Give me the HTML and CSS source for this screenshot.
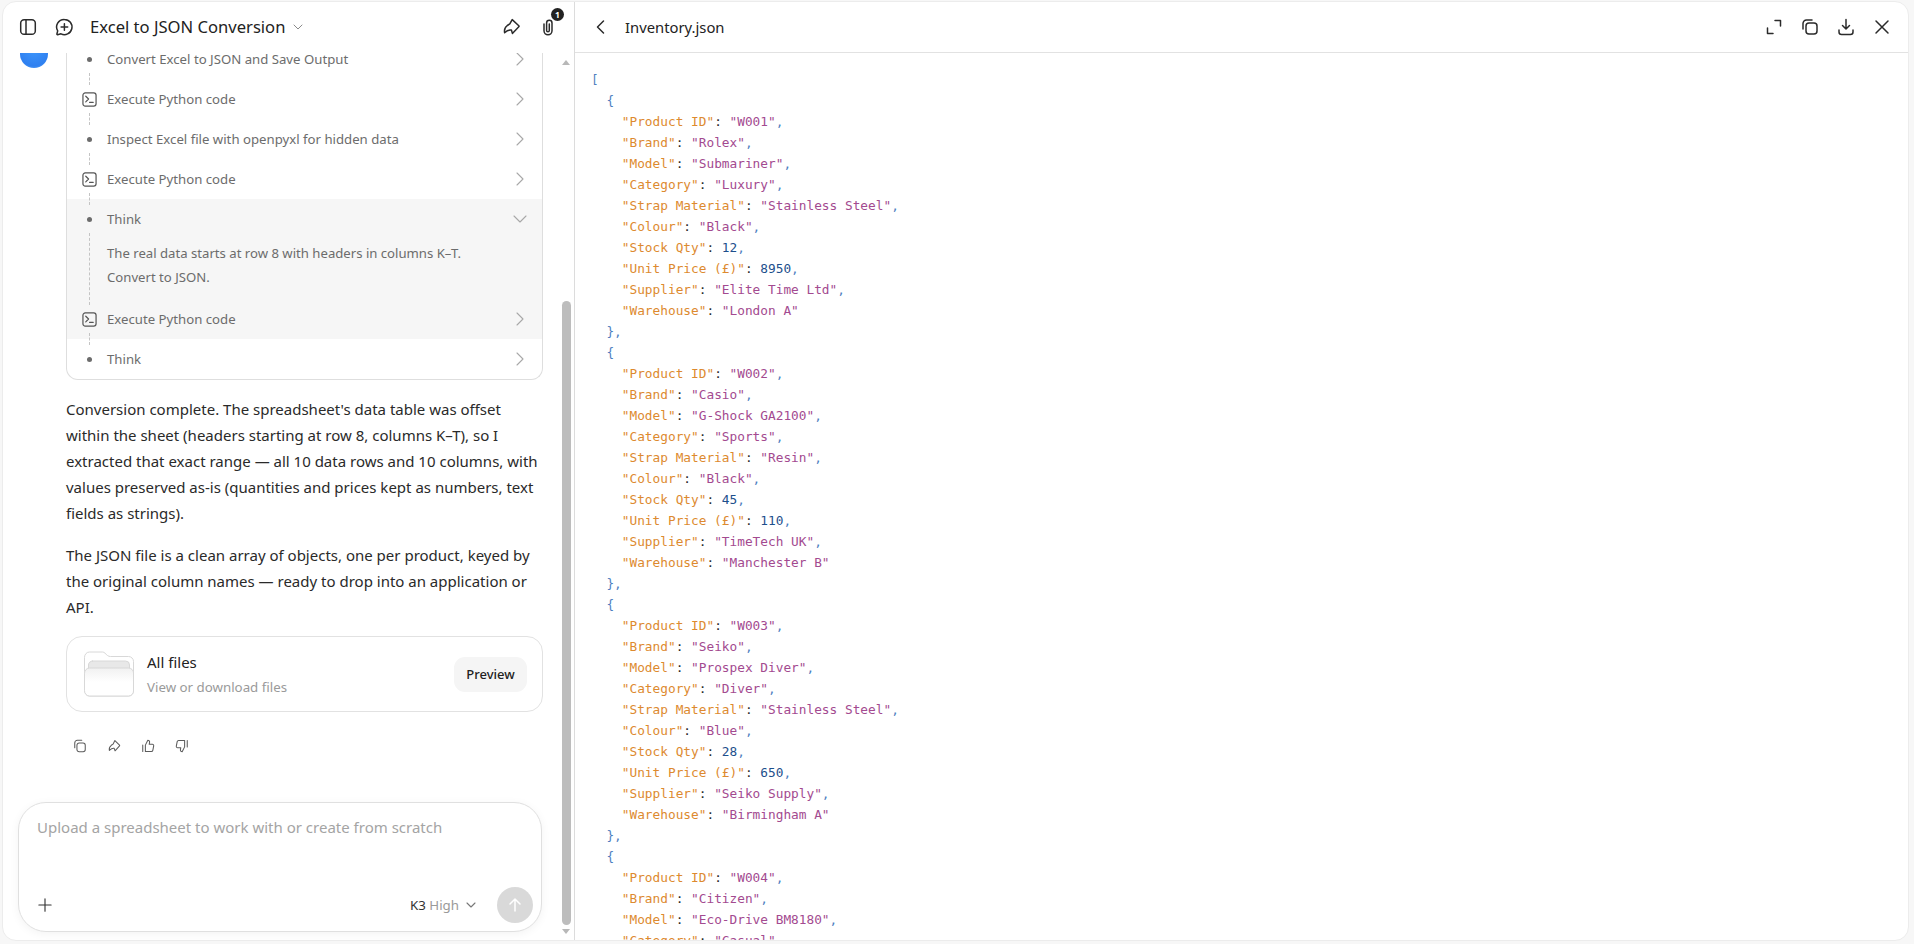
FILE: index.html
```html
<!DOCTYPE html>
<html lang="en">
<head>
<meta charset="utf-8">
<title>Excel to JSON Conversion</title>
<link rel="stylesheet" href="styles.css">
</head>
<body>
<div class="app">
  <section class="chat">
    <header class="chat-head">
      <svg class="ic20" viewBox="0 0 20 20"><rect x="2.7" y="2.7" width="14.6" height="14.6" rx="3.4"/><path d="M8 3v14"/></svg>
      <svg class="ic20" viewBox="0 0 20 20"><path d="M10.4 2.4a7.6 7.6 0 1 1-3.4 14.4l-3.4.9c-.5.1-.8-.2-.7-.7l.8-3.1a7.6 7.6 0 0 1 6.7-11.5z"/><path d="M10.4 6.7v6.6M7.1 10h6.6"/></svg>
      <h1 class="chat-title">Excel to JSON Conversion</h1>
      <svg class="chev-sm" viewBox="0 0 12 12"><path d="M2 4l4 4 4-4"/></svg>
      <div class="head-right">
        <svg class="ic20" viewBox="0 0 20 20"><path d="M11.2 2.6l6.6 6.200c.3.3.3.7 0 1l-6.400 6.600-1-3.400c-2.600-.4-4.400.4-6.800 2.700-.4-2.400-.3-5 2.700-7.200l2.500-1.600z"/></svg>
        <span class="clip">
          <svg class="ic20" viewBox="0 0 20 20"><path d="M6 7v6.800a4 4 0 0 0 8 0V6a2.700 2.700 0 0 0-5.400 0v7.500a1.300 1.300 0 0 0 2.700 0V7"/></svg>
          <span class="badge">1</span>
        </span>
      </div>
    </header>
    <div class="chat-body">
      <div class="chat-main">
        <div class="scroller">
          <span class="avatar"></span>
          <div class="thread">
            <div class="steps">
              <div class="step link"><span class="dot-wrap"><i class="dot"></i></span><span class="step-label">Convert Excel to JSON and Save Output</span><svg class="chev" viewBox="0 0 16 16"><path d="M5 2l6 6-6 6"/></svg></div>
              <div class="step link"><span class="dot-wrap"><svg class="term" viewBox="0 0 16 16"><rect x="1" y="1" width="14" height="14" rx="2.500"/><path d="M4 4.500L7 7.500 4 10.500M8 11h4"/></svg></span><span class="step-label">Execute Python code</span><svg class="chev" viewBox="0 0 16 16"><path d="M5 2l6 6-6 6"/></svg></div>
              <div class="step link"><span class="dot-wrap"><i class="dot"></i></span><span class="step-label">Inspect Excel file with openpyxl for hidden data</span><svg class="chev" viewBox="0 0 16 16"><path d="M5 2l6 6-6 6"/></svg></div>
              <div class="step link"><span class="dot-wrap"><svg class="term" viewBox="0 0 16 16"><rect x="1" y="1" width="14" height="14" rx="2.500"/><path d="M4 4.500L7 7.500 4 10.500M8 11h4"/></svg></span><span class="step-label">Execute Python code</span><svg class="chev" viewBox="0 0 16 16"><path d="M5 2l6 6-6 6"/></svg></div>
              <div class="step-group">
                <div class="step"><span class="dot-wrap"><i class="dot"></i></span><span class="step-label">Think</span><svg class="chev" viewBox="0 0 16 16"><path d="M2 5l6 6 6-6"/></svg></div>
                <div class="step-detail"><p>The real data starts at row 8 with headers in columns K–T.</p><p>Convert to JSON.</p></div>
                <div class="step link"><span class="dot-wrap"><svg class="term" viewBox="0 0 16 16"><rect x="1" y="1" width="14" height="14" rx="2.500"/><path d="M4 4.500L7 7.500 4 10.500M8 11h4"/></svg></span><span class="step-label">Execute Python code</span><svg class="chev" viewBox="0 0 16 16"><path d="M5 2l6 6-6 6"/></svg></div>
              </div>
              <div class="step"><span class="dot-wrap"><i class="dot"></i></span><span class="step-label">Think</span><svg class="chev" viewBox="0 0 16 16"><path d="M5 2l6 6-6 6"/></svg></div>
            </div>
            <p class="para">Conversion complete. The spreadsheet's data table was offset within the sheet (headers starting at row 8, columns K–T), so I extracted that exact range — all 10 data rows and 10 columns, with values preserved as-is (quantities and prices kept as numbers, text fields as strings).</p>
            <p class="para">The JSON file is a clean array of objects, one per product, keyed by the original column names — ready to drop into an application or API.</p>
            <div class="files">
              <svg class="folder" viewBox="0 0 50 46">
                <defs><linearGradient id="fg" x1="0" y1="0" x2="0" y2="1"><stop offset="0" stop-color="#f1f1f1"/><stop offset="0.5" stop-color="#fff"/></linearGradient></defs>
                <path d="M.5 6a5 5 0 0 1 5-5h13c2 0 3 2 5 3.500 1 .8 2 1 3 1h18a5 5 0 0 1 5 5V40a5 5 0 0 1-5 5H5.500a5 5 0 0 1-5-5z" fill="#fff" stroke="#d8d8d8"/>
                <rect x="4.500" y="10" width="41" height="16" rx="4" fill="#e8e8e8" stroke="#d8d8d8"/>
                <path d="M.5 22a5 5 0 0 1 5-5h39a5 5 0 0 1 5 5V40a5 5 0 0 1-5 5H5.500a5 5 0 0 1-5-5z" fill="url(#fg)" stroke="#d8d8d8"/>
              </svg>
              <div class="files-text"><div class="files-name">All files</div><div class="files-sub">View or download files</div></div>
              <button class="preview">Preview</button>
            </div>
            <div class="actions">
              <svg class="ic14" viewBox="0 0 16 16"><rect x="4.500" y="4.500" width="9.500" height="10" rx="2.500"/><path d="M2 10V4.500A3 3 0 0 1 5 1.500h5"/></svg>
              <svg class="ic14" viewBox="0 0 16 16"><path d="M9 1.800l5.300 5.200c.3.300.3.600 0 .9L9.200 13.500l-1-2.800c-2.200-.4-3.500.5-5.500 2.300-.4-2-.2-4 2.200-5.800l2-1.300z"/></svg>
              <svg class="ic14" viewBox="0 0 16 16"><path d="M5 7l2.800-5.500c1.400 0 2.200 1 2 2.300L9.400 6H13c1 0 1.700.9 1.500 1.900l-1 5c-.2.800-.8 1.300-1.600 1.300H5zM2 7v7.200"/></svg>
              <svg class="ic14" viewBox="0 0 16 16"><path d="M11 9l-2.800 5.500c-1.400 0-2.200-1-2-2.300L6.600 10H3c-1 0-1.700-.9-1.500-1.900l1-5c.2-.8.800-1.300 1.600-1.300H11zM14 1.800V9"/></svg>
            </div>
          </div>
        </div>
        <div class="composer">
          <div class="placeholder">Upload a spreadsheet to work with or create from scratch</div>
          <div class="composer-bar">
            <svg class="plus" viewBox="0 0 16 16"><path d="M8 1v14M1 8h14"/></svg>
            <span class="model"><b>K3</b> High</span>
            <svg class="chev-xs" viewBox="0 0 12 12"><path d="M2 4l4 4 4-4"/></svg>
            <span class="send"><svg viewBox="0 0 16 16"><path d="M8 14V2M3 7l5-5 5 5"/></svg></span>
          </div>
        </div>
      </div>
      <div class="scrollbar"><i class="arrow-up"></i><div class="track"><div class="thumb"></div></div><i class="arrow-down"></i></div>
    </div>
  </section>
  <section class="viewer">
    <header class="viewer-head">
      <svg class="ic20" viewBox="0 0 20 20"><path d="M12.500 4l-6 6 6 6"/></svg>
      <h2 class="viewer-title">Inventory.json</h2>
      <div class="viewer-actions">
        <svg class="ic20" viewBox="0 0 20 20"><path d="M11 3.500h5.500V9M3.500 11v5.500H9"/></svg>
        <svg class="ic20" viewBox="0 0 20 20"><rect x="6" y="6" width="11" height="11" rx="3"/><path d="M3 12V6.500A3.500 3.500 0 0 1 6.500 3H12"/></svg>
        <svg class="ic20" viewBox="0 0 20 20"><path d="M10 2.500v9M6.500 8.500l3.500 3.500 3.500-3.500M3 13v2a2.500 2.500 0 0 0 2.500 2.500h9A2.500 2.500 0 0 0 17 15v-2"/></svg>
        <svg class="ic20" viewBox="0 0 20 20"><path d="M4 4l12 12M16 4L4 16"/></svg>
      </div>
    </header>
<pre class="code"><span class="p">[</span>
  <span class="p">{</span>
    <span class="k">"Product ID"</span>: <span class="s">"W001"</span><span class="p">,</span>
    <span class="k">"Brand"</span>: <span class="s">"Rolex"</span><span class="p">,</span>
    <span class="k">"Model"</span>: <span class="s">"Submariner"</span><span class="p">,</span>
    <span class="k">"Category"</span>: <span class="s">"Luxury"</span><span class="p">,</span>
    <span class="k">"Strap Material"</span>: <span class="s">"Stainless Steel"</span><span class="p">,</span>
    <span class="k">"Colour"</span>: <span class="s">"Black"</span><span class="p">,</span>
    <span class="k">"Stock Qty"</span>: <span class="n">12</span><span class="p">,</span>
    <span class="k">"Unit Price (£)"</span>: <span class="n">8950</span><span class="p">,</span>
    <span class="k">"Supplier"</span>: <span class="s">"Elite Time Ltd"</span><span class="p">,</span>
    <span class="k">"Warehouse"</span>: <span class="s">"London A"</span>
  <span class="p">},</span>
  <span class="p">{</span>
    <span class="k">"Product ID"</span>: <span class="s">"W002"</span><span class="p">,</span>
    <span class="k">"Brand"</span>: <span class="s">"Casio"</span><span class="p">,</span>
    <span class="k">"Model"</span>: <span class="s">"G-Shock GA2100"</span><span class="p">,</span>
    <span class="k">"Category"</span>: <span class="s">"Sports"</span><span class="p">,</span>
    <span class="k">"Strap Material"</span>: <span class="s">"Resin"</span><span class="p">,</span>
    <span class="k">"Colour"</span>: <span class="s">"Black"</span><span class="p">,</span>
    <span class="k">"Stock Qty"</span>: <span class="n">45</span><span class="p">,</span>
    <span class="k">"Unit Price (£)"</span>: <span class="n">110</span><span class="p">,</span>
    <span class="k">"Supplier"</span>: <span class="s">"TimeTech UK"</span><span class="p">,</span>
    <span class="k">"Warehouse"</span>: <span class="s">"Manchester B"</span>
  <span class="p">},</span>
  <span class="p">{</span>
    <span class="k">"Product ID"</span>: <span class="s">"W003"</span><span class="p">,</span>
    <span class="k">"Brand"</span>: <span class="s">"Seiko"</span><span class="p">,</span>
    <span class="k">"Model"</span>: <span class="s">"Prospex Diver"</span><span class="p">,</span>
    <span class="k">"Category"</span>: <span class="s">"Diver"</span><span class="p">,</span>
    <span class="k">"Strap Material"</span>: <span class="s">"Stainless Steel"</span><span class="p">,</span>
    <span class="k">"Colour"</span>: <span class="s">"Blue"</span><span class="p">,</span>
    <span class="k">"Stock Qty"</span>: <span class="n">28</span><span class="p">,</span>
    <span class="k">"Unit Price (£)"</span>: <span class="n">650</span><span class="p">,</span>
    <span class="k">"Supplier"</span>: <span class="s">"Seiko Supply"</span><span class="p">,</span>
    <span class="k">"Warehouse"</span>: <span class="s">"Birmingham A"</span>
  <span class="p">},</span>
  <span class="p">{</span>
    <span class="k">"Product ID"</span>: <span class="s">"W004"</span><span class="p">,</span>
    <span class="k">"Brand"</span>: <span class="s">"Citizen"</span><span class="p">,</span>
    <span class="k">"Model"</span>: <span class="s">"Eco-Drive BM8180"</span><span class="p">,</span>
    <span class="k">"Category"</span>: <span class="s">"Casual"</span><span class="p">,</span>
</pre>
  </section>
</div>
</body>
</html>
```

FILE: styles.css
```css
* { box-sizing: border-box; }
html, body { height: 100%; margin: 0; overflow: hidden; }
body { background: #f7f7f7; font-family: "Noto Sans", sans-serif; color: #222; }
svg { fill: none; stroke: currentColor; stroke-linecap: round; stroke-linejoin: round; flex: none; display: block; }
h1, h2, p { margin: 0; font-weight: 400; }

.app {
  display: flex; height: 940px; margin: 1px 5px 0 2px;
  background: #fff; border: 1px solid #ececec; border-radius: 14px; overflow: hidden;
}
.ic20 { width: 20px; height: 20px; stroke-width: 1.5; color: #2b2b2b; }
.ic14 { width: 14px; height: 14px; stroke-width: 1.2; color: #5c5c5c; }

/* left */
.chat { width: 572px; flex: none; display: flex; flex-direction: column; border-right: 1px solid #dcdcdc; }
.chat-head { height: 51px; flex: none; display: flex; align-items: center; padding: 0 16px 2px 15px; gap: 16px; }
.chat-title { font-size: 16.6px; color: #222; margin-right: -9px; }
.chev-sm { width: 12px; height: 12px; stroke: #8a8a8a; stroke-width: 1; }
.head-right { margin-left: auto; display: flex; gap: 17px; align-items: center; }
.clip { position: relative; display: block; }
.badge {
  position: absolute; top: -9px; right: -6px; width: 13px; height: 13px; border-radius: 50%;
  background: #222; color: #fff; font-size: 8.500px; line-height: 13px; text-align: center; font-weight: 700;
}
.chat-body { flex: 1; min-height: 0; display: flex; }
.chat-main { flex: 1; min-width: 0; display: flex; flex-direction: column; }
.scroller { flex: 1; min-height: 0; overflow: hidden; position: relative; }
.avatar {
  position: absolute; left: 17px; top: -13px; width: 28px; height: 28px; border-radius: 50%;
  background: radial-gradient(circle at 50% 35%, #3d96fb, #2f80f0 70%, #66aef8);
}
.thread { margin: -14px 0 0 63px; width: 477px; }
.steps { border: 1px solid #dedede; border-top: 0; border-radius: 0 0 12px 12px; overflow: hidden; }
.step { height: 40px; display: flex; align-items: center; position: relative; color: #6c6c6c; font-size: 13.200px; }
.step.link::after {
  content: ""; position: absolute; left: 22px; bottom: -6px; height: 12px;
  border-left: 1px dashed #c4c4c4;
}
.dot-wrap { width: 40px; flex: none; display: flex; justify-content: center; padding-left: 5px; }
.dot { width: 5px; height: 5px; border-radius: 50%; background: #6c6c6c; }
.term { width: 15px; height: 15px; stroke: #555; stroke-width: 1.300; }
.step-label { flex: 1; }
.chev { width: 16px; height: 16px; margin-right: 14px; stroke: #a8a8a8; stroke-width: 1.100; }
.step-group { background: #f6f6f6; }
.step-detail { padding: 2px 0 10px 40px; font-size: 13.150px; line-height: 24px; color: #6c6c6c; position: relative; }
.step-detail::before {
  content: ""; position: absolute; left: 22px; top: -6px; bottom: -6px;
  border-left: 1px dashed #c4c4c4;
}
.para { font-size: 15px; line-height: 26px; color: #2a2a2a; margin-top: 16px; }
.files {
  margin-top: 16px; height: 76px; border: 1px solid #e2e2e2; border-radius: 16px;
  display: flex; align-items: center; padding: 0 15px 0 17px;
}
.folder { width: 50px; height: 46px; margin-right: 13px; stroke: none; }
.files-text { flex: 1; display: flex; flex-direction: column; gap: 7px; }
.files-name { font-size: 15px; line-height: 18px; color: #222; }
.files-sub { font-size: 13.300px; line-height: 18px; color: #9a9a9a; }
.preview {
  font: 500 13px "Noto Sans", sans-serif; color: #222; background: #f5f5f5; border: 0;
  border-radius: 11px; width: 73px; height: 35px; padding: 0;
}
.actions { display: flex; gap: 20px; margin: 27px 0 0 7px; }

.composer {
  flex: none; height: 130px; margin: 0 16px 8px 15px; border: 1px solid #e0e0e0; border-radius: 28px;
  box-shadow: 0 2px 10px rgba(0,0,0,.05); padding: 13px 18px 0;
  display: flex; flex-direction: column; background: #fff;
}
.placeholder { font-size: 15px; line-height: 22px; color: #a4a4a4; }
.composer-bar { margin-top: auto; height: 36px; margin-bottom: 8px; display: flex; align-items: center; margin-right: -10px; }
.plus { width: 14px; height: 14px; stroke: #333; stroke-width: 1.300; margin-right: auto; margin-left: 1px; }
.model { font-size: 13.300px; color: #9a9a9a; }
.model b { font-weight: 400; color: #333; }
.chev-xs { width: 12px; height: 12px; stroke: #777; stroke-width: 1.100; margin: 0 20px 0 6px; }
.send { width: 36px; height: 36px; border-radius: 50%; background: #d9d9d9; display: flex; align-items: center; justify-content: center; }
.send svg { width: 16px; height: 16px; stroke: #fff; stroke-width: 1.500; }

.scrollbar { width: 16px; flex: none; display: flex; flex-direction: column; align-items: center; padding-bottom: 6px; }
.arrow-up, .arrow-down { width: 0; height: 0; border-left: 4.500px solid transparent; border-right: 4.500px solid transparent; }
.arrow-up { border-bottom: 5px solid #b8b8b8; margin-top: 7px; }
.arrow-down { border-top: 5px solid #b8b8b8; margin-top: 4px; }
.track { flex: 1; width: 9px; margin-top: 236px; }
.thumb { width: 9px; height: 100%; background: #bdbdbd; border-radius: 5px; }

/* right */
.viewer { flex: 1; min-width: 0; display: flex; flex-direction: column; }
.viewer-head { height: 51px; flex: none; display: flex; align-items: center; border-bottom: 1px solid #e2e2e2; padding: 0 16px 1px 16px; }
.viewer-title { font-size: 14.800px; color: #222; margin-left: 14px; }
.viewer-actions { margin-left: auto; display: flex; gap: 16px; }
.code {
  margin: 0; flex: 1; overflow: hidden; padding: 16px 0 0 16px;
  font: 12.790px/21px "DejaVu Sans Mono", monospace; color: #2b2b2b;
}
.k { color: #dd8a2f; }
.s { color: #a34a90; }
.n { color: #1d4f8c; }
.p { color: #4f7fbf; }
```
